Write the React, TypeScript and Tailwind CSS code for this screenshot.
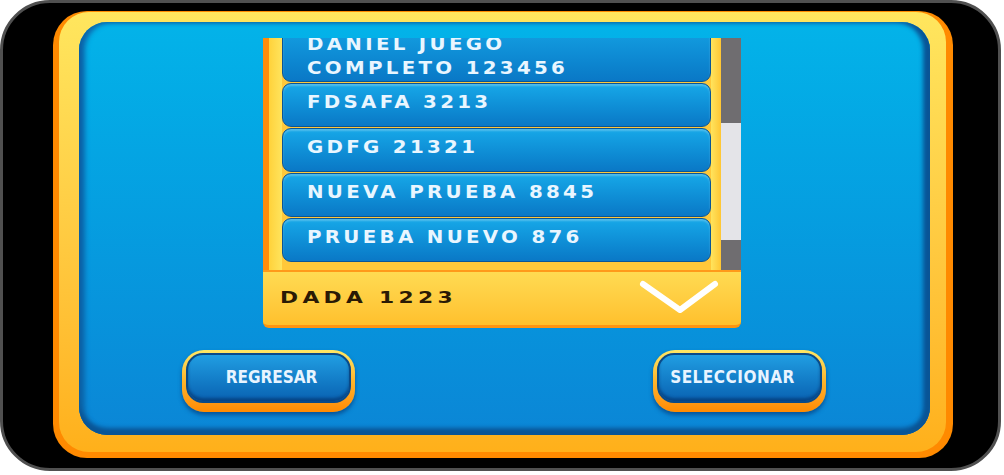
import React from "react";

const items = [
  { lines: ["DANIEL JUEGO", "COMPLETO 123456"], first: true },
  { lines: ["FDSAFA 3213"] },
  { lines: ["GDFG 21321"] },
  { lines: ["NUEVA PRUEBA 8845"] },
  { lines: ["PRUEBA NUEVO 876"] },
];

const itemText =
  "inline-block origin-left scale-x-[1.1] whitespace-nowrap text-[18px] font-bold tracking-[3px] text-[#e9f6ff] [font-family:'DejaVu_Sans',sans-serif]";

function ListItem({ lines, first }: { lines: string[]; first?: boolean }) {
  if (first) {
    return (
      <div className="-mt-[21px] h-[65px] shrink-0 rounded-[9px] border border-[#0b5596] bg-gradient-to-b from-[#17a8e8] to-[#0a78c6] pl-[24px] pt-[14px] shadow-[inset_0_2px_2px_rgba(255,255,255,0.25)]">
        {lines.map((l) => (
          <div key={l} className="leading-[23px]">
            <span className={itemText}>{l}</span>
          </div>
        ))}
      </div>
    );
  }
  return (
    <div className="flex h-[44px] shrink-0 items-center rounded-[9px] border border-[#0b5596] bg-gradient-to-b from-[#17a8e8] to-[#0a78c6] pb-[7px] pl-[24px] shadow-[inset_0_2px_2px_rgba(255,255,255,0.25)]">
      <span className={itemText}>{lines[0]}</span>
    </div>
  );
}

function GameButton({ label, wide }: { label: string; wide?: boolean }) {
  return (
    <div className="h-[62px] w-[173px] rounded-[22px] bg-gradient-to-b from-[#ffe864] via-[#ffb52a] to-[#ff8a00] px-[4px] pt-[3px] pb-[9px] shadow-[0_3px_4px_rgba(0,40,100,0.55)]">
      <div className="flex h-full items-center justify-center rounded-[17px] border-2 border-[#0a4a88] bg-gradient-to-b from-[#219ee2] to-[#0a62b2] shadow-[inset_0_-3px_3px_rgba(0,30,80,0.45)]">
        <span
          className={
            wide
              ? "-ml-[14px] text-[17px] font-bold tracking-[0.5px] text-[#e8f4ff] [font-family:'DejaVu_Sans_Condensed','Liberation_Sans_Narrow',sans-serif] [font-stretch:condensed]"
              : "ml-[6px] text-[17px] font-bold tracking-[0px] text-[#e8f4ff] [font-family:'DejaVu_Sans_Condensed','Liberation_Sans_Narrow',sans-serif] [font-stretch:condensed]"
          }
        >
          {label}
        </span>
      </div>
    </div>
  );
}

export default function App() {
  return (
    <div className="h-[475px] w-[1004px] overflow-hidden bg-white">
      <div className="flex h-[471px] w-[1001px] flex-col rounded-[50px] border-[3px] border-[#505050] bg-black pl-[50px] pr-[45px] pt-[8px] pb-[10px]">
        <div className="h-full rounded-[34px] bg-[#ff8a00] pl-[6px] pr-[7px] pt-[1px] pb-[6px]">
          <div className="h-full rounded-[30px] bg-gradient-to-b from-[#ffe65e] to-[#ffb01a] pl-[20px] pr-[16px] pt-[10px] pb-[17px]">
            <div className="flex h-full flex-col rounded-[28px] bg-gradient-to-b from-[#03b3e9] to-[#0b86d6] pt-[16px] shadow-[inset_0_-7px_4px_#0a5596,inset_6px_0_5px_#0d66ab,inset_-7px_0_4px_#0a5596]">
              {/* list box */}
              <div className="ml-[184px] flex h-[290px] w-[478px] flex-col">
                <div className="flex h-[232px]">
                  <div className="w-[6px] bg-[#ff8c0a]" />
                  <div className="w-[13px] bg-gradient-to-r from-[#ffd23a] to-[#ffe45c]" />
                  <div className="flex w-[429px] flex-col gap-[1px] overflow-hidden bg-[#ffc83a]">
                    {items.map((it, i) => (
                      <ListItem key={i} lines={it.lines} first={it.first} />
                    ))}
                  </div>
                  <div className="w-[10px] bg-gradient-to-r from-[#ffe45c] to-[#ffc632]" />
                  <div className="flex w-[20px] flex-col">
                    <div className="h-[85px] bg-[#6f6d70]" />
                    <div className="h-[117px] bg-[#e4e4e8]" />
                    <div className="flex-1 bg-[#6f6d70]" />
                  </div>
                </div>
                <div className="flex h-[58px] items-center justify-between rounded-b-[6px] border-t-2 border-b-[3px] border-t-[#ff9a1a] border-b-[#ff9410] bg-gradient-to-b from-[#ffdb52] to-[#ffc02c] pl-[17px] pr-[22px]">
                  <span className="inline-block origin-left scale-x-[1.45] whitespace-nowrap text-[15px] font-bold tracking-[3px] text-[#2a1a05] [font-family:'DejaVu_Sans',sans-serif]">
                    DADA 1223
                  </span>
                  <svg width="80" height="36" viewBox="0 0 80 36" className="-mt-[4px]">
                    <path d="M4 5 L41 31 L76 5" fill="none" stroke="#ffffff" strokeWidth="6" strokeLinecap="round" strokeLinejoin="round" />
                  </svg>
                </div>
              </div>
              {/* buttons */}
              <div className="mt-[22px] flex justify-between pl-[103px] pr-[104px]">
                <GameButton label="REGRESAR" />
                <GameButton label="SELECCIONAR" wide />
              </div>
            </div>
          </div>
        </div>
      </div>
    </div>
  );
}
